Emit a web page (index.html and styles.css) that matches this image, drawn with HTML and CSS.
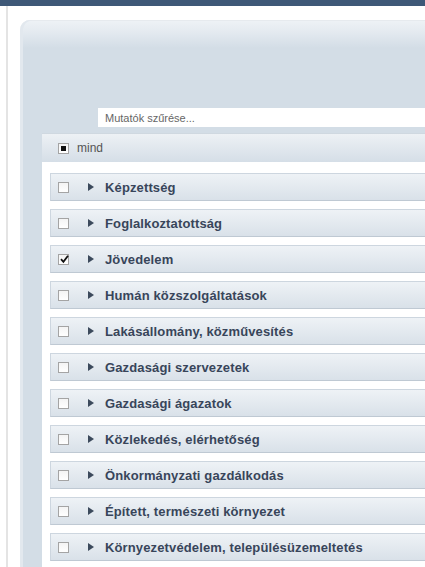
FILE: index.html
```html
<!DOCTYPE html>
<html lang="hu">
<head>
<meta charset="utf-8">
<title>Mutatók</title>
<link rel="stylesheet" href="styles.css">
</head>
<body>
<div class="topbar"></div>
<div class="page">
  <div class="panel">
    <div class="filter"><span class="placeholder">Mutatók szűrése...</span></div>
    <div class="header">
      <span class="cb cb-partial"><span class="dot"></span></span>
      <span class="mind">mind</span>
    </div>
    <div class="list">
      <div class="row"><span class="cb"></span><span class="tri"></span><span class="label">Képzettség</span></div>
      <div class="row"><span class="cb"></span><span class="tri"></span><span class="label">Foglalkoztatottság</span></div>
      <div class="row"><span class="cb cb-checked"><svg viewBox="0 0 11 11" width="11" height="11"><path d="M2 5.2 L4.4 7.8 L9 1.8" fill="none" stroke="#111" stroke-width="1.8"/></svg></span><span class="tri"></span><span class="label">Jövedelem</span></div>
      <div class="row"><span class="cb"></span><span class="tri"></span><span class="label">Humán közszolgáltatások</span></div>
      <div class="row"><span class="cb"></span><span class="tri"></span><span class="label">Lakásállomány, közművesítés</span></div>
      <div class="row"><span class="cb"></span><span class="tri"></span><span class="label">Gazdasági szervezetek</span></div>
      <div class="row"><span class="cb"></span><span class="tri"></span><span class="label">Gazdasági ágazatok</span></div>
      <div class="row"><span class="cb"></span><span class="tri"></span><span class="label">Közlekedés, elérhetőség</span></div>
      <div class="row"><span class="cb"></span><span class="tri"></span><span class="label">Önkormányzati gazdálkodás</span></div>
      <div class="row"><span class="cb"></span><span class="tri"></span><span class="label">Épített, természeti környezet</span></div>
      <div class="row"><span class="cb"></span><span class="tri"></span><span class="label">Környezetvédelem, településüzemeltetés</span></div>
    </div>
  </div>
</div>
</body>
</html>
```
FILE: styles.css
```css
html, body {
  margin: 0;
  padding: 0;
  height: 100%;
  overflow: hidden;
  background: #fff;
  font-family: "Liberation Sans", Arial, sans-serif;
}

.topbar {
  height: 6px;
  background: #3e5877;
}

.page {
  margin-left: 6px;
  border-left: 2px solid #e4e4e4;
  padding: 14px 0 0 12px;
  height: 561px;
  box-sizing: border-box;
}

.panel {
  height: 100%;
  border-radius: 10px 0 0 0;
  background: linear-gradient(#eef2f6 0, #e4eaf0 12px, #d3dde6 28px, #d3dde6 100%);
  box-shadow: inset 3px 0 0 #e2e8ee, inset 0 1px 0 #e6eaee;
  padding-top: 88px;
  box-sizing: border-box;
  display: flex;
  flex-direction: column;
  overflow: hidden;
}

.filter {
  margin-left: 78px;
  height: 19px;
  flex: none;
  background: #fff;
  display: flex;
  align-items: center;
  padding-left: 7px;
  font-size: 11px;
  color: #666;
}

.header {
  margin-top: 6px;
  margin-left: 22px;
  height: 29px;
  flex: none;
  background: linear-gradient(#edf1f5, #d5dee7);
  border-top: 1px solid #cfd8e0;
  box-sizing: border-box;
  display: flex;
  align-items: center;
  padding-left: 16px;
}

.mind {
  margin-left: 8px;
  font-size: 12px;
  color: #555;
}

.list {
  margin-left: 22px;
  background: #fff;
  padding: 11px 0 0 8px;
  flex: 1;
  min-height: 0;
  overflow: hidden;
}

.row {
  height: 28px;
  box-sizing: border-box;
  margin-bottom: 8px;
  border: 1px solid #cdd6df;
  border-bottom-color: #bfc9d3;
  border-right: none;
  background: linear-gradient(#eef2f6, #d9e1e9);
  display: flex;
  align-items: center;
  padding-left: 7px;
}

.cb {
  width: 11px;
  height: 11px;
  box-sizing: border-box;
  border: 1px solid #a4a4a4;
  background: linear-gradient(#f4f4f4, #fff);
  flex: none;
  display: flex;
  align-items: center;
  justify-content: center;
  position: relative;
}

.cb svg {
  position: absolute;
  left: 0;
  top: -1px;
}

.dot {
  width: 5px;
  height: 5px;
  background: #111;
}

.tri {
  width: 0;
  height: 0;
  margin-left: 19px;
  border-left: 6px solid #3c4a5c;
  border-top: 4px solid transparent;
  border-bottom: 4px solid transparent;
  flex: none;
}

.label {
  margin-left: 11px;
  font-size: 13px;
  font-weight: bold;
  letter-spacing: 0.13px;
  color: #38455a;
  white-space: nowrap;
}
```
